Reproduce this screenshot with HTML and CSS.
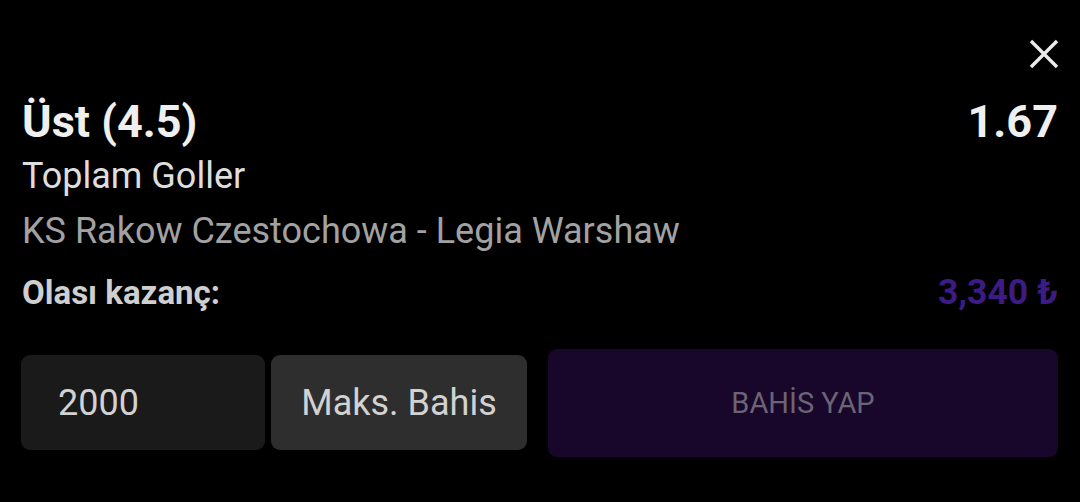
FILE: index.html
```html
<!DOCTYPE html>
<html lang="tr">
<head>
<meta charset="utf-8">
<title>Bahis</title>
<link rel="stylesheet" href="styles.css">
</head>
<body>
<div class="slip">
  <div class="slip-top">
    <button class="close" aria-label="Kapat">
      <svg viewBox="0 0 30 30" width="30" height="30"><path d="M2 2 L28 28 M28 2 L2 28" stroke="currentColor" stroke-width="3.4" fill="none" stroke-linecap="butt"/></svg>
    </button>
  </div>
  <div class="pick-row">
    <div class="pick">Üst (4.5)</div>
    <div class="odds">1.67</div>
  </div>
  <div class="market">Toplam Goller</div>
  <div class="event">KS Rakow Czestochowa - Legia Warshaw</div>
  <div class="win-row">
    <div class="win-label">Olası kazanç:</div>
    <div class="win-value">3,340 ₺</div>
  </div>
  <div class="actions">
    <input class="stake" type="text" value="2000">
    <button class="max">Maks. Bahis</button>
    <button class="place">BAHİS YAP</button>
  </div>
</div>
</body>
</html>
```
FILE: styles.css
```css
html, body {
  margin: 0;
  padding: 0;
  background: #000;
  height: 100%;
}

body {
  font-family: Roboto, "Liberation Sans", sans-serif;
  color: #eeeeee;
}

.slip {
  padding: 39px 22px 0 21px;
}

.slip-top {
  display: flex;
  justify-content: flex-end;
  height: 30px;
  margin-right: -1px;
}

.close {
  width: 30px;
  height: 30px;
  padding: 0;
  border: 0;
  background: none;
  color: #ececec;
  display: block;
}

.close svg {
  display: block;
}

.pick-row {
  display: flex;
  justify-content: space-between;
  align-items: baseline;
  margin-top: 27px;
  font-size: 45px;
  line-height: 52px;
  font-weight: 700;
  color: #efefef;
}

.pick {
  padding-left: 1px;
}

.market {
  margin-top: 6px;
  font-size: 36px;
  line-height: 44px;
  color: #dedede;
  padding-left: 1px;
}

.event {
  margin-top: 11px;
  font-size: 36px;
  line-height: 44px;
  color: #a2a2a2;
  padding-left: 1px;
}

.win-row {
  display: flex;
  justify-content: space-between;
  align-items: baseline;
  margin-top: 19px;
  line-height: 40px;
  font-weight: 700;
}

.win-label {
  font-size: 33px;
  color: #cfcfcf;
  padding-left: 1px;
}

.win-value {
  font-size: 35.5px;
  color: #3d1b84;
}

.actions {
  display: flex;
  align-items: flex-start;
  margin-top: 36px;
}

.stake {
  box-sizing: border-box;
  width: 244px;
  height: 95px;
  margin-top: 6px;
  border: 0;
  border-radius: 9px;
  background: #1a1a1a;
  color: #d2d2d2;
  font-family: inherit;
  font-size: 36px;
  padding: 0 0 0 37px;
  outline: none;
}

.max {
  box-sizing: border-box;
  width: 256px;
  height: 95px;
  margin: 6px 0 0 6px;
  border: 0;
  border-radius: 9px;
  background: #2e2e2e;
  color: #d2d2d2;
  font-family: inherit;
  font-size: 36px;
  padding: 0;
}

.place {
  flex: 1;
  height: 108px;
  margin-left: 21px;
  border: 0;
  border-radius: 9px;
  background: #18062b;
  color: #6c6474;
  font-family: inherit;
  font-size: 29px;
  padding: 0;
}
```
